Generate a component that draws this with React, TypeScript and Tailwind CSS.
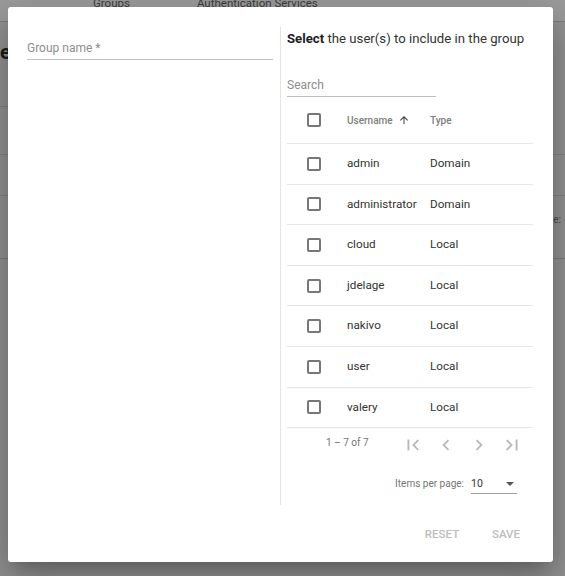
import React from "react";

const users = [
  { name: "admin", type: "Domain" },
  { name: "administrator", type: "Domain" },
  { name: "cloud", type: "Local" },
  { name: "jdelage", type: "Local" },
  { name: "nakivo", type: "Local" },
  { name: "user", type: "Local" },
  { name: "valery", type: "Local" },
];

function Checkbox() {
  return <span className="block size-[14px] rounded-[2px] border-2 border-[#777]" />;
}

function PagerIcon({ d }: { d: string }) {
  return (
    <button className="flex w-[33px] justify-center">
      <svg viewBox="0 0 24 24" className="size-[22px] fill-[#b8b8b8]">
        <path d={d} />
      </svg>
    </button>
  );
}

export default function App() {
  return (
    <div className="relative h-[576px] w-[565px] overflow-hidden bg-[#939393] font-['Roboto',sans-serif]">
      {/* page behind the overlay */}
      <div className="flex h-[22px] items-start gap-[67px] border-b border-[#7d7d7d] bg-[#9c9c9c] pl-[93px] text-[11.5px] leading-[14px] text-[#3d3d3d]">
        <span className="-mt-[4px]">Groups</span>
        <span className="-mt-[4px]">Authentication Services</span>
      </div>
      <div className="h-[84px] pt-[18px] text-[20px] font-bold leading-[24px] text-[#1c1c1c]">e</div>
      <div className="h-[48px] w-[40px] border-t border-[#808080]" />
      <div className="h-[41px] border-t border-[#828282]" />
      <div className="flex h-[63px] items-start justify-end border-t border-[#828282] pt-[16px] text-[10px] text-[#4a4a4a]">
        <span className="mr-[4px]">e:</span>
      </div>
      <div className="border-t border-[#7c7c7c]" />

      {/* dialog */}
      <div className="absolute left-[8px] top-[7px] flex h-[555px] w-[545px] flex-col rounded-[3px] bg-white shadow-[0_11px_15px_-7px_rgba(0,0,0,0.2),0_24px_38px_3px_rgba(0,0,0,0.14),0_9px_46px_8px_rgba(0,0,0,0.12)]">
        <div className="flex h-[498px] pt-[20px] pl-[19px] pr-[20px]">
          {/* left column */}
          <div className="w-[246px]">
            <div className="mt-[13px] border-b border-[#c2c2c2] pb-[3px] text-[12px] leading-[16px] text-[#8d8d8d]">
              Group name *
            </div>
          </div>
          <div className="mx-[6px] ml-[7px] w-px bg-[#e3e3e3]" />
          {/* right column */}
          <div className="flex w-[246px] flex-col">
            <div className="mt-[2px] text-[13.2px] leading-[20px] text-[#333]">
              <span className="font-bold text-[#1e1e1e]">Select</span> the user(s) to include in the group
            </div>
            <div className="mt-[28px] w-[149px] border-b border-[#bdbdbd] pb-[3px] text-[12px] leading-[16px] text-[#8d8d8d]">
              Search
            </div>
            <div className="flex h-[47px] items-center border-b border-[#e6e6e6] text-[10px] font-medium text-[#7d7d7d]">
              <div className="w-[60px] pl-[20px]">
                <Checkbox />
              </div>
              <div className="flex w-[83px] items-center gap-[5px]">
                Username
                <svg viewBox="0 0 24 24" className="size-[12px] fill-[#3c3c3c]">
                  <path d="M4 12l1.41 1.41L11 7.83V20h2V7.83l5.58 5.59L20 12l-8-8-8 8z" />
                </svg>
              </div>
              <div>Type</div>
            </div>
            {users.map((u) => (
              <div key={u.name} className="flex h-[40.6px] items-center border-b border-[#e6e6e6] text-[11.7px] text-[#333]">
                <div className="w-[60px] pl-[20px]">
                  <Checkbox />
                </div>
                <div className="w-[83px]">{u.name}</div>
                <div>{u.type}</div>
              </div>
            ))}
            <div className="flex h-[49px] items-start pr-[5px]">
              <div className="ml-[39px] mt-[8px] text-[10px] leading-[14px] text-[#757575]">1 – 7 of 7</div>
              <div className="ml-auto mt-[6px] flex">
                <PagerIcon d="M18.41 16.59L13.82 12l4.59-4.59L17 6l-6 6 6 6zM6 6h2v12H6z" />
                <PagerIcon d="M15.41 7.41L14 6l-6 6 6 6 1.41-1.41L10.83 12z" />
                <PagerIcon d="M10 6L8.59 7.41 13.17 12l-4.58 4.59L10 18l6-6z" />
                <PagerIcon d="M5.59 7.41L10.18 12l-4.59 4.59L7 18l6-6-6-6zM16 6h2v12h-2z" />
              </div>
            </div>
            <div className="flex items-end justify-end pr-[16px]">
              <span className="mb-[3px] mr-[7px] text-[10px] leading-[14px] text-[#757575]">Items per page:</span>
              <div className="flex w-[46px] items-center justify-between border-b border-[#9e9e9e] pb-[2px] text-[10.5px] leading-[14px] text-[#333]">
                <span>10</span>
                <svg viewBox="0 0 10 5" className="mr-[3px] h-[4px] w-[8px] fill-[#555]">
                  <path d="M0 0l5 5 5-5z" />
                </svg>
              </div>
            </div>
          </div>
        </div>
        <div className="flex flex-1 items-start justify-end pr-[15px] pt-[12px]">
          <button className="h-[36px] w-[64px] text-[11.5px] font-medium text-[#bdbdbd]">RESET</button>
          <button className="h-[36px] w-[64px] text-[11.5px] font-medium text-[#bdbdbd]">SAVE</button>
        </div>
      </div>
    </div>
  );
}
